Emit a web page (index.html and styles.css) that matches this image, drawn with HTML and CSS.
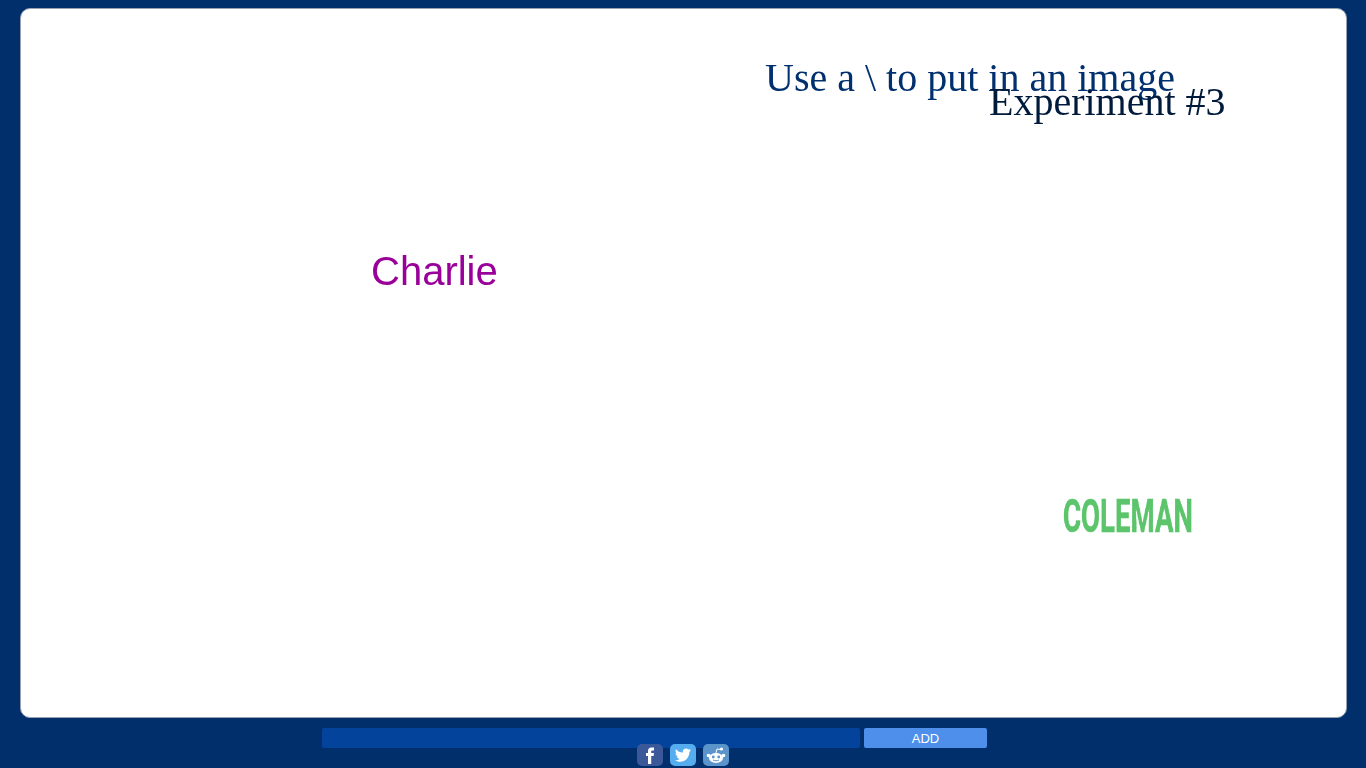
FILE: index.html
```html
<!DOCTYPE html>
<html lang="en">

<head>
    <meta charset="UTF-8">
    <meta name="viewport" content="width=device-width, initial-scale=1.0">
    <title>Experiment #3</title>
    <link rel="stylesheet" href="styles.css">
</head>

<body>
    <div class="board">
        <p class="word hint">Use a \ to put in an image</p>
        <p class="word title">Experiment #3</p>
        <p class="word charlie">Charlie</p>
        <p class="word coleman">COLEMAN</p>
    </div>

    <form class="add-form">
        <input class="add-input" type="text" aria-label="Add">
        <button class="add-button" type="button">ADD</button>
    </form>

    <div class="share">
        <a class="share-icon facebook" href="#" aria-label="Facebook">
            <svg viewBox="0 0 26 22" width="26" height="22">
                <path fill="#fff" d="M11 20v-8H9V9h2V7c0-2.400 1.200-3.600 3.500-3.600H17v3h-1.600c-.9 0-1.200.4-1.200 1.200V9H17l-.4 3h-2.400v8z" />
            </svg>
        </a>
        <a class="share-icon twitter" href="#" aria-label="Twitter">
            <svg viewBox="0 0 26 22" width="26" height="22">
                <path fill="#fff" d="M21 6.100c-.6.300-1.200.4-1.900.5.700-.4 1.200-1 1.400-1.800-.6.400-1.300.6-2.100.8-.6-.6-1.400-1-2.400-1-1.800 0-3.300 1.500-3.300 3.300 0 .3 0 .5.100.8-2.700-.1-5.200-1.400-6.800-3.400-.3.500-.5 1.100-.5 1.700 0 1.100.6 2.100 1.500 2.700-.5 0-1-.2-1.500-.4 0 1.600 1.100 2.900 2.600 3.200-.5.100-1 .2-1.500.1.400 1.300 1.600 2.200 3.100 2.300-1.400 1.100-3.200 1.600-4.900 1.400 1.500.9 3.200 1.500 5.100 1.500 6.100 0 9.500-5.100 9.500-9.500v-.4c.7-.5 1.200-1.100 1.600-1.800z" />
            </svg>
        </a>
        <a class="share-icon reddit" href="#" aria-label="Reddit">
            <svg viewBox="0 0 26 22" width="26" height="22">
                <ellipse fill="#fff" cx="13" cy="14" rx="7" ry="5" />
                <circle fill="#fff" cx="5.500" cy="11.500" r="1.800" />
                <circle fill="#fff" cx="20.500" cy="11.500" r="1.800" />
                <circle fill="#fff" cx="18.500" cy="5" r="1.600" />
                <path fill="none" stroke="#fff" d="M13 9l1-4 4 .5" />
                <circle fill="#5b93cb" cx="10.300" cy="13" r="1.400" />
                <circle fill="#5b93cb" cx="15.700" cy="13" r="1.400" />
                <path fill="none" stroke="#5b93cb" d="M10 16c1.800 1 4.200 1 6 0" />
            </svg>
        </a>
    </div>
</body>

</html>
```

FILE: styles.css
```css
html,
body {
    height: 100%;
}

body {
    margin: 0;
    overflow: hidden;
    background-color: #002f6c;
    font-family: "Liberation Sans", Arial, sans-serif;
}

.board {
    position: relative;
    box-sizing: border-box;
    width: 1327px;
    height: 710px;
    margin: 8px 0 0 20px;
    background-color: #fff;
    border: 1px solid #98a2b0;
    border-radius: 10px;
}

.word {
    position: absolute;
    margin: 0;
    font-size: 40px;
    line-height: 48px;
    white-space: nowrap;
    will-change: transform;
}

.hint {
    left: 743.5px;
    top: 45px;
    color: #00306e;
    font-family: "Liberation Serif", "Times New Roman", serif;
}

.title {
    left: 967.5px;
    top: 69px;
    color: #001a3c;
    font-family: "Liberation Serif", "Times New Roman", serif;
}

.charlie {
    left: 350px;
    top: 238px;
    color: #990099;
}

.coleman {
    left: 1042px;
    top: 483px;
    color: #5cc56c;
    font-family: Roboto, "Liberation Sans", sans-serif;
    font-size: 46px;
    font-weight: 700;
    -webkit-text-stroke: 0.5px #5cc56c;
    transform: scaleX(0.6);
    transform-origin: left center;
}

.add-form {
    display: flex;
    gap: 4px;
    width: 665px;
    margin: 10px 0 0 322px;
}

.add-input {
    box-sizing: border-box;
    width: 538px;
    height: 20px;
    padding: 0 6px;
    background-color: #03439c;
    border: none;
    border-radius: 2px;
}

.add-button {
    width: 123px;
    height: 20px;
    padding: 0;
    background-color: #4d8fea;
    border: none;
    border-radius: 2px;
    color: #fff;
    font-family: inherit;
    font-size: 13px;
}

.share {
    position: relative;
    display: flex;
    justify-content: center;
    gap: 7px;
    width: 92px;
    margin: -4px 0 0 637px;
}

.share-icon {
    display: block;
    width: 26px;
    height: 22px;
    border-radius: 5px;
}

.share-icon svg {
    display: block;
}

.facebook {
    background-color: #3b5998;
}

.twitter {
    background-color: #55acee;
}

.reddit {
    background-color: #5b93cb;
}
```
